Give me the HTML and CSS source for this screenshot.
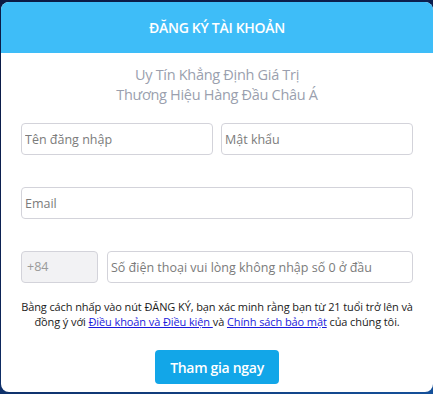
FILE: index.html
```html
<!DOCTYPE html>
<html lang="vi">
<head>
    <meta charset="UTF-8">
    <meta name="viewport" content="width=device-width, initial-scale=1.0">
    <title>Đăng ký tài khoản</title>
    <link rel="stylesheet" href="styles.css">
</head>
<body>
    <div class="card">
        <div class="card-head">
            <h1>ĐĂNG KÝ TÀI KHOẢN</h1>
        </div>

        <div class="card-body">
            <!-- Slogan -->
            <p class="slogan">Uy Tín Khẳng Định Giá Trị<br>Thương Hiệu Hàng Đầu Châu Á</p>

            <!-- Formulaire d'inscription -->
            <form class="reg-form">
                <div class="row">
                    <input type="text" class="field" placeholder="Tên đăng nhập">
                    <input type="password" class="field" placeholder="Mật khẩu">
                </div>

                <div class="row">
                    <input type="email" class="field" placeholder="Email">
                </div>

                <div class="row phone-row">
                    <div class="prefix">+84</div>
                    <input type="tel" class="field" placeholder="Số điện thoại vui lòng không nhập số 0 ở đầu">
                </div>

                <p class="terms">
                    Bằng cách nhấp vào nút ĐĂNG KÝ, bạn xác minh rằng bạn từ 21 tuổi trở lên và<br>
                    đồng ý với <a href="#">Điều khoản và Điều kiện </a>và <a href="#">Chính sách bảo mật</a> của chúng tôi.
                </p>

                <button type="submit" class="btn-join">Tham gia ngay</button>
            </form>
        </div>
    </div>
</body>
</html>
```

FILE: styles.css
```css
body {
    font-family: "Open Sans", "Noto Sans", sans-serif;
    background: linear-gradient(160deg, #0b1a45 0%, #0d2559 60%, #14509a 100%);
    margin: 0;
    padding: 2px 0 0 1px;
    height: 394px;
    box-sizing: border-box;
    overflow: hidden;
}

.card {
    width: 432px;
    height: 390px;
    background: #ffffff;
    border-radius: 8px;
    overflow: hidden;
}

.card-head {
    background-color: #3ebdf8; /* Bleu ciel */
    height: 51px;
    display: flex;
    align-items: center;
    justify-content: center;
}

.card-head h1 {
    margin: 0;
    color: white;
    font-size: 14px;
    font-weight: 600;
    letter-spacing: -0.3px;
}

.card-body {
    padding: 12px 20px 0 20px;
}

.slogan {
    margin: 0;
    text-align: center;
    color: #9a9fae;
    font-size: 14.5px;
    line-height: 20px;
    letter-spacing: -0.3px;
}

.reg-form {
    margin-top: 18px;
}

.row {
    display: flex;
    gap: 8px;
    margin-bottom: 32px;
}

.field {
    flex: 1;
    min-width: 0;
    height: 32px;
    box-sizing: border-box;
    border: 1px solid #d3d3da;
    border-radius: 4px;
    padding: 0 3px;
    font-family: inherit;
    font-size: 12.5px;
    color: #333;
    background: white;
}

.field::placeholder {
    color: #7b7b7b;
}

.phone-row {
    gap: 9px;
    margin-bottom: 16px;
}

.prefix {
    width: 77px;
    height: 32px;
    box-sizing: border-box;
    border: 1px solid #d3d3da;
    border-radius: 4px;
    background: #f2f2f4;
    color: #9a9a9a;
    font-size: 12.5px;
    line-height: 30px;
    padding: 0 5px;
}

.terms {
    margin: 0 -10px;
    text-align: center;
    font-size: 11px;
    line-height: 15px;
    color: #1a1a1a;
    letter-spacing: -0.1px;
    white-space: nowrap;
}

.terms a {
    color: #1a1adb;
}

.btn-join {
    display: block;
    margin: 21px auto 0;
    width: 124px;
    height: 34px;
    border: none;
    border-radius: 4px;
    background-color: #12a6e8;
    color: white;
    font-family: inherit;
    font-size: 14px;
    font-weight: 600;
    letter-spacing: -0.3px;
    cursor: pointer;
}
```
